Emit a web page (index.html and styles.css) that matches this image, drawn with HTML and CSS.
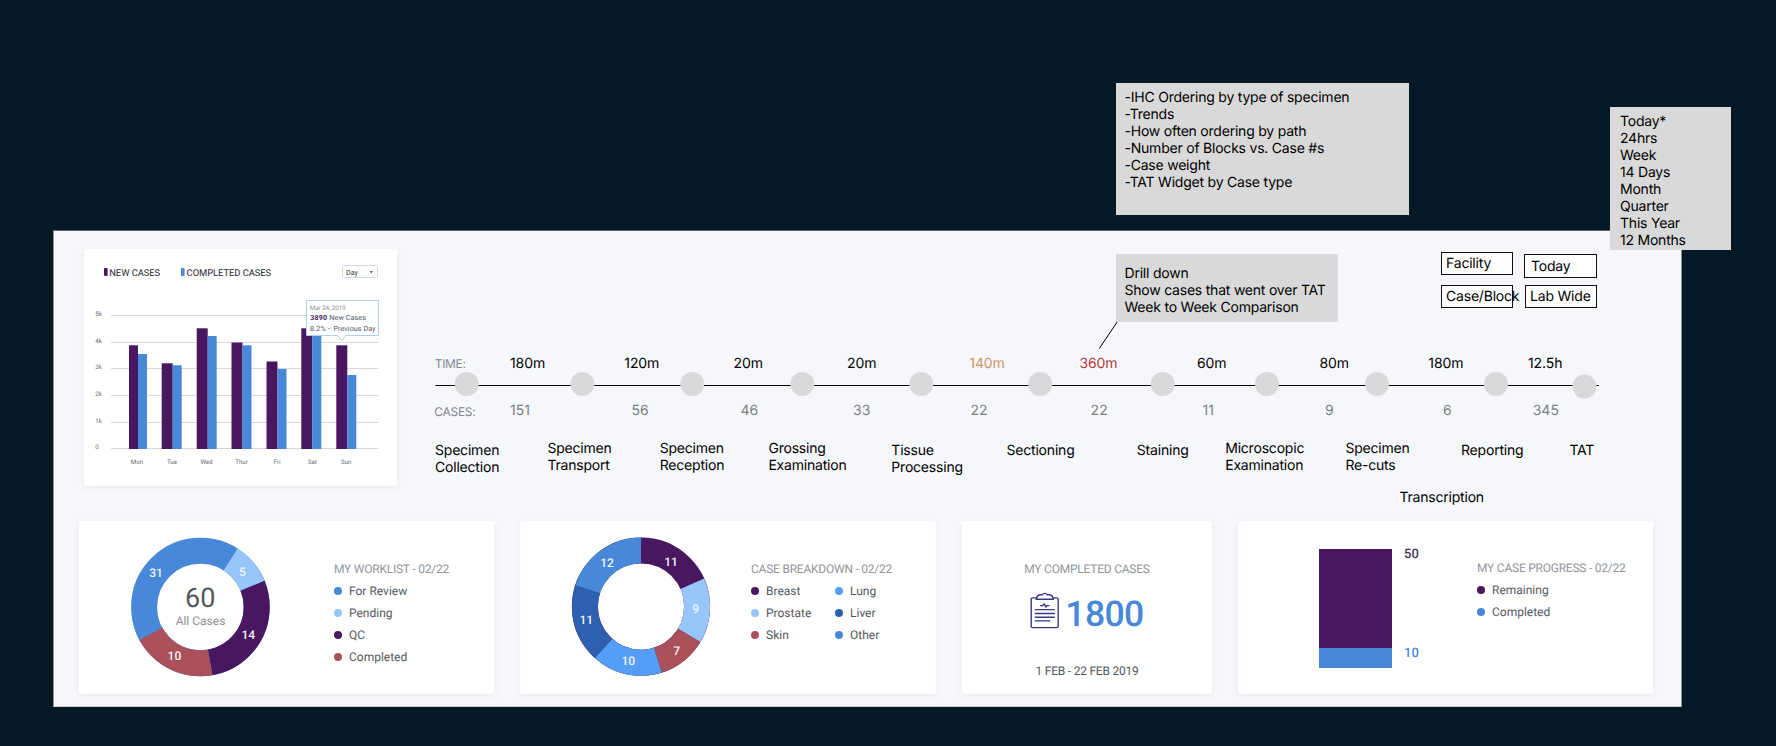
FILE: index.html
```html
<!DOCTYPE html>
<html lang="en">
<head>
  <meta charset="UTF-8"/>
  <meta name="viewport" content="width=device-width, initial-scale=1.0"/>
  <title>Lab Dashboard</title>
  <link rel="stylesheet" href="styles.css">
</head>
<body>
  <main class="board">
    <div class="top-row">
      <section class="card chart-card">
        <svg viewBox="84 249 313 237" width="313" height="237">
          <!-- legend -->
          <rect class="purple" x="104" y="268" width="3.6" height="8" rx="1"/>
          <text class="chart-legend" x="109.2" y="275.6" textLength="51">NEW CASES</text>
          <rect class="blue" x="181" y="268" width="3.6" height="8" rx="1"/>
          <text class="chart-legend" x="186.6" y="275.6" textLength="84.6">COMPLETED CASES</text>

          <rect class="select" x="342.5" y="265.5" width="35" height="12" rx="1"/>
          <text class="select-text" x="346" y="274.6">Day</text>
          <path class="caret" d="M369.5 271h3.6l-1.8 2.6z"/>

          <!-- grid -->
          <path class="grid" d="M111 315.5h267M111 342.5h267M111 368.5h267M111 395.5h267M111 422.5h267M111 448.5h267"/>
          <g class="axis">
            <text x="95.3" y="316.2">5k</text>
            <text x="95.3" y="343">4k</text>
            <text x="95.3" y="369.4">3k</text>
            <text x="95.3" y="396">2k</text>
            <text x="95.3" y="423">1k</text>
            <text x="95.3" y="449">0</text>
          </g>

          <!-- bars -->
          <g class="purple">
            <rect x="129" y="345.3" width="9" height="103.7"/>
            <rect x="161.7" y="363.3" width="11" height="85.7"/>
            <rect x="196.7" y="328.3" width="11" height="120.7"/>
            <rect x="231.5" y="342.5" width="11" height="106.5"/>
            <rect x="266.5" y="361.5" width="11" height="87.5"/>
            <rect x="301.3" y="328.3" width="11" height="120.7"/>
            <rect x="336.3" y="345.3" width="11" height="103.7"/>
          </g>
          <g class="blue">
            <rect x="138" y="354" width="9" height="95"/>
            <rect x="172.7" y="365.3" width="9" height="83.7"/>
            <rect x="207.7" y="336" width="9" height="113"/>
            <rect x="242.5" y="345.3" width="9" height="103.7"/>
            <rect x="277.5" y="369" width="9" height="80"/>
            <rect x="312.3" y="334" width="9" height="115"/>
            <rect x="347.3" y="375" width="9" height="74"/>
          </g>
          <g class="axis days">
            <text x="137" y="463.8">Mon</text>
            <text x="172" y="463.8">Tue</text>
            <text x="206.5" y="463.8">Wed</text>
            <text x="241.5" y="463.8">Thur</text>
            <text x="277" y="463.8">Fri</text>
            <text x="312.3" y="463.8">Sat</text>
            <text x="346.3" y="463.8">Sun</text>
          </g>

          <!-- tooltip -->
          <path class="tooltip" d="M306.5 300.5h72v35h-32.5l-4.2 5l-4.2-5h-31.1z"/>
          <text class="tip-date" x="309.7" y="309.7" textLength="36">Mar 24, 2019</text>
          <text class="tip-value" x="310.3" y="320" textLength="16.8">3890</text>
          <text class="tip-text" x="329.3" y="320" textLength="36.6">New Cases</text>
          <text class="tip-text" x="310" y="331" textLength="15.8">8.2%</text>
          <path class="tip-arrow" d="M327.5 327.6l1.7 1.6l1.7-1.6"/>
          <text class="tip-text" x="333.5" y="331" textLength="42">Previous Day</text>
        </svg>
      </section>

      <section class="timeline">
        <svg viewBox="397 231 1284 290" width="1284" height="290">
          <path class="track" d="M435.5 385.5H1599"/>
          <path class="track" d="M1117.5 321.5L1099.3 348.5"/>
          <g class="node">
            <circle cx="466.7" cy="384" r="12"/>
            <circle cx="582.4" cy="384" r="12"/>
            <circle cx="692.3" cy="384" r="12"/>
            <circle cx="802.3" cy="384" r="12"/>
            <circle cx="921.3" cy="384" r="12"/>
            <circle cx="1040.3" cy="384" r="12"/>
            <circle cx="1162.7" cy="384" r="12"/>
            <circle cx="1267" cy="384" r="12"/>
            <circle cx="1377" cy="384" r="12"/>
            <circle cx="1496" cy="384" r="12"/>
            <circle cx="1584.4" cy="386.6" r="12"/>
          </g>
          <g class="row-name">
            <text x="434.7" y="368">TIME:</text>
            <text x="434.3" y="416">CASES:</text>
          </g>
          <g class="time">
            <text x="510" y="368.3">180m</text>
            <text x="624.3" y="368.3">120m</text>
            <text x="733.6" y="368.3">20m</text>
            <text x="847" y="368.3">20m</text>
            <text class="warn" x="969.3" y="368.3">140m</text>
            <text class="late" x="1079.4" y="368.3">360m</text>
            <text x="1197" y="368.3">60m</text>
            <text x="1319.5" y="368.3">80m</text>
            <text x="1428.3" y="368.3">180m</text>
            <text x="1528" y="368.3">12.5h</text>
          </g>
          <g class="count">
            <text x="510" y="414.7">151</text>
            <text x="631.6" y="414.7">56</text>
            <text x="740.5" y="414.7">46</text>
            <text x="853" y="414.7">33</text>
            <text x="970.5" y="414.7">22</text>
            <text x="1090.6" y="414.7">22</text>
            <text x="1202.6" y="414.7">11</text>
            <text x="1325" y="414.7">9</text>
            <text x="1443" y="414.7">6</text>
            <text x="1532.7" y="414.7">345</text>
          </g>
          <g class="step">
            <text x="435" y="455">Specimen<tspan x="435" dy="17">Collection</tspan></text>
            <text x="547.4" y="453">Specimen<tspan x="547.4" dy="17">Transport</tspan></text>
            <text x="659.7" y="453">Specimen<tspan x="659.7" dy="17">Reception</tspan></text>
            <text x="768.4" y="453">Grossing<tspan x="768.4" dy="17">Examination</tspan></text>
            <text x="891.3" y="455">Tissue<tspan x="891.3" dy="17">Processing</tspan></text>
            <text x="1006.5" y="455">Sectioning</text>
            <text x="1136.8" y="455">Staining</text>
            <text x="1225.2" y="453">Microscopic<tspan x="1225.2" dy="17">Examination</tspan></text>
            <text x="1345.4" y="453">Specimen<tspan x="1345.4" dy="17">Re-cuts</tspan></text>
            <text x="1461" y="455">Reporting</text>
            <text x="1569.4" y="455">TAT</text>
            <text x="1399.4" y="501.7">Transcription</text>
          </g>
        </svg>
      </section>
    </div>

    <div class="cards">
      <section class="card wide">
        <svg viewBox="79 521 255 173" width="255" height="173">
          <g class="ring" transform="rotate(-90 200.4 607)">
            <circle class="s-blue" cx="200.4" cy="607" r="56.3" pathLength="360"/>
            <circle class="s-light" cx="200.4" cy="607" r="56.3" pathLength="360" stroke-dasharray="35.3 324.7" stroke-dashoffset="-32.5"/>
            <circle class="s-purple" cx="200.4" cy="607" r="56.3" pathLength="360" stroke-dasharray="102.2 257.8" stroke-dashoffset="-67.8"/>
            <circle class="s-red" cx="200.4" cy="607" r="56.3" pathLength="360" stroke-dasharray="71.6 288.4" stroke-dashoffset="-170"/>
          </g>
          <g class="slice">
            <text x="156" y="577">31</text>
            <text x="242.3" y="575.7">5</text>
            <text x="248.3" y="638.6">14</text>
            <text x="174.4" y="659.6">10</text>
          </g>
          <text class="total" x="200.3" y="607.2">60</text>
          <text class="total-label" x="200.5" y="624.7">All Cases</text>
        </svg>
        <div class="legend">
          <h2>MY WORKLIST - 02/22</h2>
          <ul>
            <li><span class="dot bg-blue"></span>For Review</li>
            <li><span class="dot bg-light"></span>Pending</li>
            <li><span class="dot bg-purple"></span>QC</li>
            <li><span class="dot bg-red"></span>Completed</li>
          </ul>
        </div>
      </section>

      <section class="card wide">
        <svg viewBox="520 521 231 173" width="231" height="173">
          <g class="ring" transform="rotate(-90 641 606.6)">
            <circle class="s-purple" cx="641" cy="606.6" r="56.1" pathLength="360"/>
            <circle class="s-light" cx="641" cy="606.6" r="56.1" pathLength="360" stroke-dasharray="54.8 305.2" stroke-dashoffset="-66"/>
            <circle class="s-red" cx="641" cy="606.6" r="56.1" pathLength="360" stroke-dasharray="41.7 318.3" stroke-dashoffset="-120.8"/>
            <circle class="s-sky" cx="641" cy="606.6" r="56.1" pathLength="360" stroke-dasharray="59.5 300.5" stroke-dashoffset="-162.5"/>
            <circle class="s-navy" cx="641" cy="606.6" r="56.1" pathLength="360" stroke-dasharray="66 294" stroke-dashoffset="-222"/>
            <circle class="s-blue" cx="641" cy="606.6" r="56.1" pathLength="360" stroke-dasharray="72 288" stroke-dashoffset="-288"/>
          </g>
          <g class="slice">
            <text x="671" y="566">11</text>
            <text x="695.7" y="613.3">9</text>
            <text x="676.6" y="654.7">7</text>
            <text x="628.3" y="664.6">10</text>
            <text x="586.3" y="623.7">11</text>
            <text x="607" y="566.7">12</text>
          </g>
        </svg>
        <div class="legend two-col">
          <h2>CASE BREAKDOWN - 02/22</h2>
          <ul>
            <li><span class="dot bg-purple"></span>Breast</li>
            <li><span class="dot bg-sky"></span>Lung</li>
            <li><span class="dot bg-light"></span>Prostate</li>
            <li><span class="dot bg-navy"></span>Liver</li>
            <li><span class="dot bg-red"></span>Skin</li>
            <li><span class="dot bg-blue"></span>Other</li>
          </ul>
        </div>
      </section>

      <section class="card completed">
        <h2>MY COMPLETED CASES</h2>
        <div class="figure">
          <svg class="clipboard" viewBox="0 -0.6 30 37" width="30" height="37">
            <path d="M7 5.3H2.6Q1.2 5.3 1.2 6.7V33.6Q1.2 35 2.6 35H26.8Q28.2 35 28.2 33.6V6.7Q28.2 5.3 26.8 5.3H22.6"/>
            <path d="M6.3 6.6Q7 2.2 10.5 2.2H12.2Q13 .8 14.8 .8T17.3 2.2H19.2Q22.6 2.2 23.3 6.6Z"/>
            <path d="M10 13H12.6L14 11.4L16 14.4L17 13H19.5"/>
            <path d="M4.8 17H24.8M4.8 20.9H24.8M4.8 24.6H24.8M4.8 28.3H20.3"/>
          </svg>
          <strong>1800</strong>
        </div>
        <p>1 FEB - 22 FEB 2019</p>
      </section>

      <section class="card wide">
        <div class="progress">
          <div class="stack">
            <div class="remaining"></div>
            <div class="done"></div>
          </div>
          <div class="stack-labels">
            <span>50</span>
            <span class="done-label">10</span>
          </div>
        </div>
        <div class="legend raised">
          <h2>MY CASE PROGRESS - 02/22</h2>
          <ul>
            <li><span class="dot bg-purple"></span>Remaining</li>
            <li><span class="dot bg-blue"></span>Completed</li>
          </ul>
        </div>
      </section>
    </div>
  </main>

  <!-- filter boxes -->
  <div class="filter facility">Facility</div>
  <div class="filter today">Today</div>
  <div class="filter case-block">Case/Block</div>
  <div class="filter lab-wide">Lab Wide</div>

  <!-- notes pinned on the canvas -->
  <aside class="note note-ideas">
    -IHC Ordering by type of specimen<br>
    -Trends<br>
    -How often ordering by path<br>
    -Number of Blocks vs. Case #s<br>
    -Case weight<br>
    -TAT Widget by Case type
  </aside>
  <aside class="note note-drill">
    Drill down<br>
    Show cases that went over TAT<br>
    Week to Week Comparison
  </aside>
  <aside class="note note-range">
    Today*<br>
    24hrs<br>
    Week<br>
    14 Days<br>
    Month<br>
    Quarter<br>
    This Year<br>
    12 Months
  </aside>
</body>
</html>
```
FILE: styles.css
```css
:root {
  --canvas: #051825;
  --board: #f6f7fb;
  --note: #d9d9d9;
  --purple: #48175f;
  --blue: #4788d8;
  --light: #98c6fb;
  --sky: #559ef8;
  --navy: #2d60b0;
  --red: #a9505a;
  --text: #55585e;
  --muted: #93959a;
}
* { box-sizing:border-box; margin:0; padding:0; }
body {
  position:relative; width:1776px; height:746px; overflow:hidden;
  background:var(--canvas); color:#000;
  font-family:Inter,sans-serif; font-size:14px; line-height:17px;
  text-rendering:geometricPrecision;
}
svg { display:block; flex:none; }

/* Board */
.board {
  position:absolute; left:53px; top:230px;
  width:1629px; height:477px;
  background:var(--board);
  border:1px solid #8b8f96; border-top-color:#5d636b; border-bottom-color:#c9ccd2;
}
.top-row { display:flex; height:290px; padding-left:30px; }
.card {
  background:#fff; border-radius:3px;
  box-shadow:0 2px 6px rgba(60,70,100,0.07);
  font-family:Roboto,sans-serif;
}
.chart-card { width:313px; height:237px; margin-top:18px; flex:none; }
.timeline { flex:none; }

/* Bar chart */
.purple { fill:var(--purple); }
.blue { fill:var(--blue); }
.chart-legend { font-size:9.4px; fill:#26262e; }
.select { fill:#fff; stroke:#d5d7dc; }
.select-text { font-size:7.2px; fill:#333; }
.caret { fill:#666; }
.grid { stroke:#d6d7db; fill:none; }
.axis { font-size:6.2px; fill:#6a6c72; }
.days { text-anchor:middle; }
.tooltip { fill:#fff; stroke:#aed0f6; }
.tip-date { font-size:6.4px; fill:#8c8e93; }
.tip-value { font-size:7px; font-weight:700; fill:#3f2a5c; }
.tip-text { font-size:7.2px; fill:#55575e; }
.tip-arrow { fill:none; stroke:#7db3f2; }

/* Timeline */
.track { stroke:#000; fill:none; }
.node { fill:var(--note); }
.row-name { font-size:12px; fill:#85878b; letter-spacing:-0.3px; }
.time { letter-spacing:-0.1px; }
.step { letter-spacing:-0.2px; }
.count { fill:#7d7f83; }
.warn { fill:#c89868; }
.late { fill:#b03a38; }

/* Lower cards */
.cards { display:flex; gap:26px; padding-left:25px; }
.cards .card { height:173px; }
.wide { width:415px; display:flex; }
.wide:nth-child(2) { width:416px; }
.ring { fill:none; stroke-width:26; }
.s-purple { stroke:var(--purple); }
.s-blue { stroke:var(--blue); }
.s-light { stroke:var(--light); }
.s-sky { stroke:var(--sky); }
.s-navy { stroke:var(--navy); }
.s-red { stroke:var(--red); }
.slice { font-size:12px; font-weight:500; fill:#f3f4f8; text-anchor:middle; }
.total { font-size:27px; fill:#55575c; text-anchor:middle; }
.total-label { font-size:12px; fill:#8e9095; text-anchor:middle; }

.legend { padding-top:39px; white-space:nowrap; color:var(--text); font-size:12px; }
.legend h2, .completed h2 {
  font-size:12px; line-height:18px; font-weight:400; letter-spacing:-0.23px;
  color:var(--muted);
}
.legend ul { list-style:none; margin-top:2px; }
.legend li { display:flex; align-items:center; height:22px; }
.two-col ul { display:grid; grid-template-columns:84px auto; }
.raised { padding-top:38px; }
.dot { width:8px; height:8px; border-radius:50%; margin-right:7px; }
.bg-purple { background:var(--purple); }
.bg-blue { background:var(--blue); }
.bg-light { background:var(--light); }
.bg-sky { background:var(--sky); }
.bg-navy { background:var(--navy); }
.bg-red { background:var(--red); }

.completed {
  width:250px; padding-top:39px;
  display:flex; flex-direction:column; align-items:center;
}
.figure { display:flex; gap:5px; height:40px; margin-top:14px; }
.figure strong {
  font-size:35.5px; line-height:44px; font-weight:500; letter-spacing:-0.6px;
  color:var(--blue);
}
.clipboard { fill:none; stroke:#3b3a80; stroke-width:1.4; }
.completed p {
  font-size:12px; line-height:18px; letter-spacing:-0.23px;
  margin-top:30px; color:var(--text);
}

.progress { display:flex; width:239px; padding:28px 0 0 81px; gap:12px; }
.stack { width:73px; }
.remaining { height:99px; background:var(--purple); }
.done { height:20px; background:var(--blue); }
.stack-labels {
  display:flex; flex-direction:column; justify-content:space-between;
  height:116px; margin-top:-3px;
  font-size:13px; font-weight:500; color:#44335c;
}
.done-label { color:var(--blue); }

/* Filters */
.filter {
  position:absolute; height:23px; width:72px; padding-left:4px;
  background:#fff; border:1px solid #111; line-height:22px; white-space:nowrap;
  letter-spacing:-0.2px;
}
.facility { left:1441px; top:252px; }
.today { left:1524px; top:254px; width:73px; height:24px; padding-left:6px; line-height:24px; }
.case-block { left:1441px; top:285px; }
.lab-wide { left:1525px; top:285px; }

/* Notes */
.note { position:absolute; background:var(--note); white-space:nowrap; letter-spacing:-0.22px; }
.note-ideas { left:1116px; top:83px; width:293px; height:132px; padding:5.5px 8.5px; }
.note-drill { left:1116px; top:254px; width:222px; height:68px; padding:10.5px 8.5px; }
.note-range { left:1610px; top:107px; width:121px; height:143px; padding:5.5px 10px; }
```
